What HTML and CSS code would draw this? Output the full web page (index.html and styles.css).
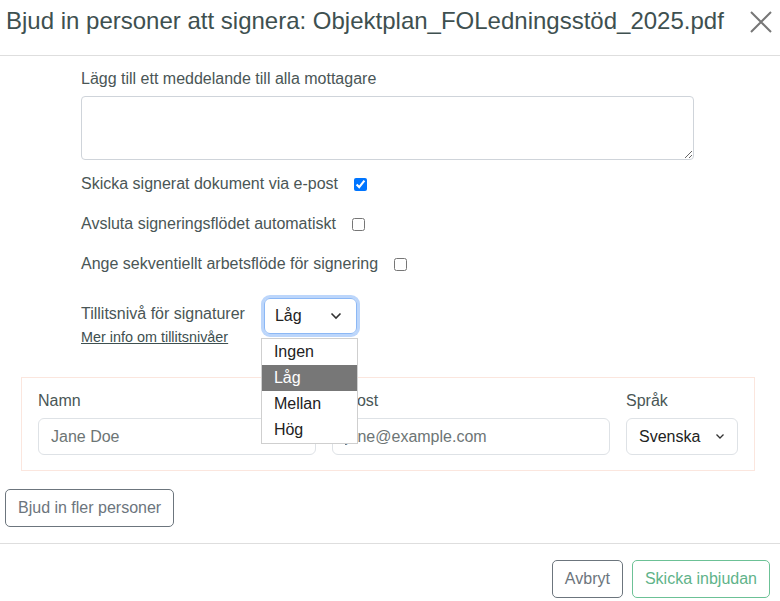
FILE: index.html
```html
<!DOCTYPE html>
<html lang="sv">
<head>
    <meta charset="UTF-8">
    <meta name="viewport" content="width=device-width, initial-scale=1.0">
    <title>Bjud in personer att signera</title>
    <link rel="stylesheet" href="styles.css">
</head>
<body>
    <div class="modal">
        <div class="modal-header">
            <h1 class="modal-title">Bjud in personer att signera: Objektplan_FOLedningsstöd_2025.pdf</h1>
            <button class="close" type="button" aria-label="Stäng">
                <svg width="22" height="22" viewBox="0 0 22 22">
                    <path d="M1 1 L21 21 M21 1 L1 21" stroke="#777" stroke-width="2" fill="none"/>
                </svg>
            </button>
        </div>

        <div class="modal-body">
            <div class="options">
                <label class="label" for="message">Lägg till ett meddelande till alla mottagare</label>
                <textarea id="message" class="message"></textarea>

                <div class="check-row">
                    <span>Skicka signerat dokument via e-post</span>
                    <input type="checkbox" checked>
                </div>
                <div class="check-row">
                    <span>Avsluta signeringsflödet automatiskt</span>
                    <input type="checkbox">
                </div>
                <div class="check-row">
                    <span>Ange sekventiellt arbetsflöde för signering</span>
                    <input type="checkbox">
                </div>

                <div class="trust">
                    <div class="trust-text">
                        <span>Tillitsnivå för signaturer</span>
                        <a href="#">Mer info om tillitsnivåer</a>
                    </div>
                    <div class="trust-select">
                        <div class="select focus">
                            <span>Låg</span>
                            <svg width="12" height="8" viewBox="0 0 12 8"><path d="M1.5 1.5 L6 6 L10.5 1.5" stroke="#333" stroke-width="1.6" fill="none"/></svg>
                        </div>
                        <ul class="dropdown">
                            <li>Ingen</li>
                            <li class="selected">Låg</li>
                            <li>Mellan</li>
                            <li>Hög</li>
                        </ul>
                    </div>
                </div>
            </div>

            <div class="person">
                <div class="field name">
                    <label>Namn</label>
                    <input type="text" placeholder="Jane Doe">
                </div>
                <div class="field email">
                    <label>E-post</label>
                    <input type="text" placeholder="jane@example.com">
                </div>
                <div class="field lang">
                    <label>Språk</label>
                    <div class="select">
                        <span>Svenska</span>
                        <svg width="10" height="7" viewBox="0 0 10 7"><path d="M1.5 1.5 L5 5 L8.5 1.5" stroke="#333" stroke-width="1.3" fill="none"/></svg>
                    </div>
                </div>
            </div>

            <button class="btn btn-grey more" type="button">Bjud in fler personer</button>
        </div>

        <div class="modal-footer">
            <button class="btn btn-grey" type="button">Avbryt</button>
            <button class="btn btn-green" type="button">Skicka inbjudan</button>
        </div>
    </div>
</body>
</html>
```

FILE: styles.css
```css
body {
    margin: 0;
    font-family: "Liberation Sans", Arial, sans-serif;
    color: #4a5656;
    background: #fff;
}
.modal-header {
    display: flex;
    align-items: flex-start;
    justify-content: space-between;
    height: 55px;
    padding: 0 8px 0 6px;
    border-bottom: 1px solid #dedede;
}
.modal-title {
    margin: 7px 0 0;
    font-size: 24px;
    line-height: 28px;
    font-weight: normal;
    color: #3e5050;
    white-space: nowrap;
}
.close {
    border: 0;
    background: none;
    padding: 0;
    margin-top: 11px;
    display: flex;
}
.modal-body {
    padding: 14px 0 0;
}
.options {
    margin-left: 81px;
    width: 613px;
}
.label {
    display: block;
    font-size: 16px;
    line-height: 18px;
    margin-bottom: 8px;
}
.message {
    display: block;
    box-sizing: border-box;
    width: 613px;
    height: 64px;
    border: 1px solid #cfd4da;
    border-radius: 4px;
    margin: 0 0 4px;
}
.check-row {
    display: flex;
    align-items: center;
    height: 40px;
    font-size: 16px;
}
.check-row input {
    margin: 0 0 0 16px;
    width: 13px;
    height: 13px;
}
.trust {
    display: flex;
    align-items: flex-start;
    margin-top: 14px;
}
.trust-text {
    display: flex;
    flex-direction: column;
    align-items: flex-start;
    font-size: 16px;
    line-height: 18px;
    padding-top: 7px;
}
.trust-text a {
    font-size: 14.4px;
    line-height: 17px;
    color: #3e5050;
    margin-top: 6px;
}
.trust-select {
    position: relative;
    margin-left: 19px;
}
.select {
    display: flex;
    align-items: center;
    justify-content: space-between;
    box-sizing: border-box;
    height: 37px;
    padding: 0 12px;
    border: 1px solid #dee2e6;
    border-radius: 6px;
    font-size: 16px;
    color: #222;
}
.select.focus {
    width: 93px;
    height: 36px;
    padding: 0 14px 0 10px;
    border-color: #8cb8f5;
    box-shadow: 0 0 0 3px #bcd6fb;
}
.dropdown {
    position: absolute;
    top: 40px;
    left: -3px;
    width: 95px;
    margin: 0;
    padding: 0;
    list-style: none;
    background: #fff;
    border: 1px solid #cfcfcf;
    z-index: 2;
}
.dropdown li {
    height: 26px;
    line-height: 26px;
    padding-left: 12px;
    font-size: 16px;
    color: #222;
}
.dropdown li.selected {
    background: #777;
    color: #fff;
}
.person {
    display: flex;
    gap: 16px;
    margin: 31px 25px 0 21px;
    padding: 14px 16px 15px;
    border: 1px solid #fbe6de;
}
.field {
    display: flex;
    flex-direction: column;
}
.field label {
    font-size: 16px;
    line-height: 18px;
    margin-bottom: 8px;
}
.field input {
    box-sizing: border-box;
    height: 37px;
    border: 1px solid #dee2e6;
    border-radius: 6px;
    padding: 0 12px;
    font-family: inherit;
    font-size: 16px;
}
.field input::placeholder {
    color: #6d7575;
}
.name,
.email {
    width: 278px;
}
.lang {
    width: 112px;
}
.btn {
    box-sizing: border-box;
    height: 38px;
    padding: 0 12px;
    background: #fff;
    border: 1px solid;
    border-radius: 5px;
    font-family: inherit;
    font-size: 16px;
    white-space: nowrap;
}
.btn-grey {
    border-color: #6c757d;
    color: #6c757d;
}
.btn-green {
    border-color: #6cc196;
    color: #5fb38a;
}
.more {
    display: block;
    margin: 18px 0 16px 5px;
}
.modal-footer {
    display: flex;
    justify-content: flex-end;
    gap: 9px;
    padding: 16px 10px 0;
    border-top: 1px solid #dedede;
}
```
